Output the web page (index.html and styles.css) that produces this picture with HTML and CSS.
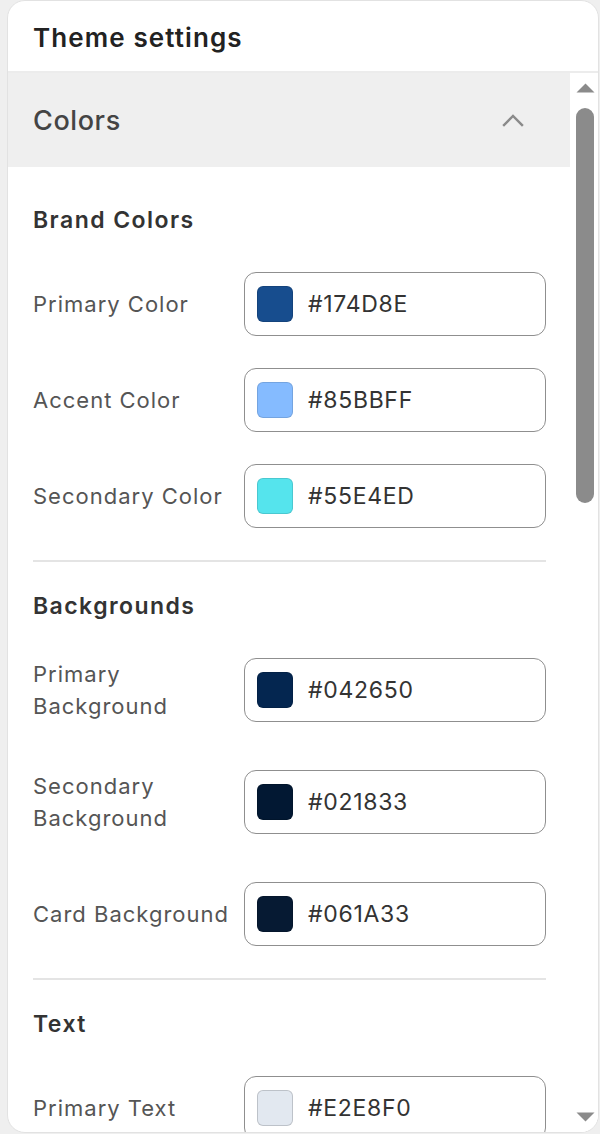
FILE: index.html
```html
<!DOCTYPE html>
<html lang="en">
<head>
<meta charset="utf-8">
<title>Theme settings</title>
<link rel="stylesheet" href="styles.css">
</head>
<body>
<div class="panel">
  <header class="panel-header">
    <h1 class="panel-title">Theme settings</h1>
  </header>
  <div class="panel-body">
    <div class="scroll-view">
      <button class="accordion-head" type="button">
        <span class="accordion-title">Colors</span>
        <svg class="chevron" width="22" height="14" viewBox="0 0 22 14" aria-hidden="true"><path d="M2 12 L11 3 L20 12" fill="none" stroke="#8a8a8a" stroke-width="2.4" stroke-linecap="square"/></svg>
      </button>
      <div class="accordion-content">
        <section class="group group-first">
          <h2 class="group-title">Brand Colors</h2>
          <div class="rows">
            <div class="row"><span class="label">Primary Color</span><div class="field"><span class="swatch" style="background:#174D8E"></span><span class="hex">#174D8E</span></div></div>
            <div class="row"><span class="label">Accent Color</span><div class="field"><span class="swatch" style="background:#85BBFF"></span><span class="hex">#85BBFF</span></div></div>
            <div class="row"><span class="label">Secondary Color</span><div class="field"><span class="swatch" style="background:#55E4ED"></span><span class="hex">#55E4ED</span></div></div>
          </div>
        </section>
        <section class="group">
          <h2 class="group-title">Backgrounds</h2>
          <div class="rows rows-wide">
            <div class="row"><span class="label">Primary Background</span><div class="field"><span class="swatch" style="background:#042650"></span><span class="hex">#042650</span></div></div>
            <div class="row"><span class="label">Secondary Background</span><div class="field"><span class="swatch" style="background:#021833"></span><span class="hex">#021833</span></div></div>
            <div class="row"><span class="label">Card Background</span><div class="field"><span class="swatch" style="background:#061A33"></span><span class="hex">#061A33</span></div></div>
          </div>
        </section>
        <section class="group">
          <h2 class="group-title">Text</h2>
          <div class="rows">
            <div class="row"><span class="label">Primary Text</span><div class="field"><span class="swatch swatch-light" style="background:#E2E8F0"></span><span class="hex">#E2E8F0</span></div></div>
            <div class="row"><span class="label">Secondary Text</span><div class="field"><span class="swatch" style="background:#94A3B8"></span><span class="hex">#94A3B8</span></div></div>
          </div>
        </section>
      </div>
    </div>
    <div class="scrollbar" aria-hidden="true">
      <div class="sb-button">
        <svg width="19" height="10" viewBox="0 0 19 10"><path d="M9.5 0.5 L18.5 9.5 L0.5 9.5 Z" fill="#8b8b8b"/></svg>
      </div>
      <div class="sb-track">
        <div class="sb-thumb"></div>
      </div>
      <div class="sb-button">
        <svg width="19" height="10" viewBox="0 0 19 10"><path d="M0.5 0.5 L18.5 0.5 L9.5 9.5 Z" fill="#8b8b8b"/></svg>
      </div>
    </div>
  </div>
</div>
</body>
</html>
```
FILE: styles.css
```css
* { box-sizing: border-box; }

html, body {
  margin: 0;
  padding: 0;
  height: 100%;
}

body {
  background: #efefef;
  font-family: Inter, "Noto Sans", "Liberation Sans", sans-serif;
  overflow: hidden;
}

.panel {
  margin-left: 7px;
  width: 592px;
  height: 1133px;
  background: #fff;
  border: 1px solid #e2e2e2;
  border-radius: 18px;
  overflow: hidden;
  display: flex;
  flex-direction: column;
}

.panel-header {
  flex: 0 0 auto;
  height: 72px;
  padding: 0 25px;
  display: flex;
  align-items: center;
  border-bottom: 2px solid #ececec;
}

.panel-title {
  margin: 0;
  font-size: 26px;
  font-weight: 600;
  color: #222;
  letter-spacing: 1.1px;
  transform: translateY(1px);
}

.panel-body {
  flex: 1 1 auto;
  min-height: 0;
  display: flex;
}

.scroll-view {
  flex: 1 1 auto;
  min-width: 0;
  overflow: hidden;
}

.scrollbar {
  flex: 0 0 28px;
  display: flex;
  flex-direction: column;
  background: #fff;
}

.sb-button {
  flex: 0 0 30px;
  display: flex;
  align-items: center;
  padding-left: 6px;
}

.sb-button svg {
  display: block;
}

.sb-track {
  flex: 1 1 auto;
  padding: 5px 4px 0 6px;
}

.sb-thumb {
  height: 395px;
  border-radius: 9px;
  background: #8b8b8b;
}

.accordion-head {
  width: 100%;
  height: 94px;
  border: 0;
  margin: 0;
  padding: 0 46px 0 25px;
  background: #efefef;
  display: flex;
  align-items: center;
  justify-content: space-between;
  font-family: inherit;
  cursor: pointer;
}

.accordion-title {
  font-size: 27px;
  font-weight: 500;
  color: #444;
  letter-spacing: 0.6px;
}

.chevron {
  display: block;
}

.accordion-content {
  padding: 0 24px 40px 25px;
}

.group {
  border-top: 2px solid #e4e4e4;
  padding-top: 28px;
  padding-bottom: 32px;
}

.group-first {
  border-top: 0;
  padding-top: 37px;
}

.group-title {
  margin: 0 0 36px;
  font-size: 23px;
  line-height: 32px;
  font-weight: 600;
  color: #333;
  letter-spacing: 1.45px;
}

.rows {
  display: flex;
  flex-direction: column;
  gap: 32px;
}

.rows-wide {
  gap: 48px;
}

.row {
  display: grid;
  grid-template-columns: 1fr 302px;
  align-items: center;
}

.label {
  font-size: 22px;
  line-height: 32px;
  color: #555;
  letter-spacing: 1px;
  padding-right: 8px;
}

.field {
  height: 64px;
  border: 1px solid #8f8f8f;
  border-radius: 12px;
  display: flex;
  align-items: center;
  padding-left: 12px;
  gap: 15px;
  background: #fff;
}

.swatch {
  width: 36px;
  height: 36px;
  border-radius: 6px;
  border: 1.5px solid rgba(0, 0, 0, 0.12);
  flex: 0 0 auto;
}

.swatch-light {
  border-color: rgba(0, 0, 0, 0.16);
}

.hex {
  font-size: 23px;
  color: #333;
  letter-spacing: 0.7px;
}
```
